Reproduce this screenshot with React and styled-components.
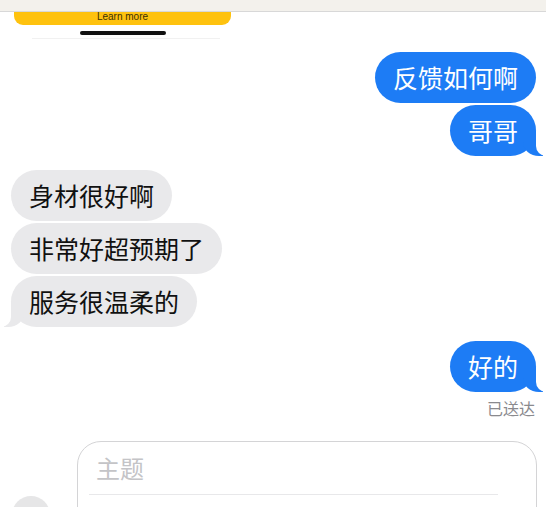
import React from "react";
import styled, { createGlobalStyle, css } from "styled-components";

const Global = createGlobalStyle`
  html, body { margin: 0; padding: 0; background: #ffffff; overflow: hidden; }
  body { font-family: "Noto Sans CJK SC", "Noto Sans", sans-serif; }
`;

const Page = styled.div`
  width: 546px;
  height: 507px;
  display: flex;
  flex-direction: column;
  background: #fff;
  overflow: hidden;
`;

const TopBar = styled.div`
  height: 12px;
  background: #f3f1ec;
  border-bottom: 1px solid #d8d8d8;
  box-sizing: border-box;
  flex-shrink: 0;
`;

const Banner = styled.div`
  margin-left: 14px;
  width: 217px;
  height: 13px;
  background: #fec20f;
  border-radius: 0 0 9px 9px;
  display: flex;
  justify-content: center;
  align-items: flex-start;
  overflow: hidden;
  font-family: "Liberation Sans", Arial, sans-serif;
  font-size: 10px;
  line-height: 9px;
  color: #3b2f05;
  flex-shrink: 0;
`;

const HomeIndicator = styled.div`
  margin: 6px 0 0 80px;
  width: 86px;
  height: 4px;
  border-radius: 2px;
  background: #111;
  flex-shrink: 0;
`;

const FaintLine = styled.div`
  margin: 3px 0 0 32px;
  width: 188px;
  height: 1px;
  background: #f1f1f1;
  flex-shrink: 0;
`;

const Thread = styled.div`
  display: flex;
  flex-direction: column;
  padding-top: 13px;
  gap: 14px;
`;

const Group = styled.div`
  display: flex;
  flex-direction: column;
  gap: 2px;
  align-items: ${(p) => (p.$me ? "flex-end" : "flex-start")};
  padding: ${(p) => (p.$me ? "0 10px 0 0" : "0 0 0 11px")};
`;

const blueTail = css`
  &::before {
    content: "";
    position: absolute;
    bottom: 0;
    right: -7px;
    width: 20px;
    height: 25px;
    background: #1d7cf5;
    border-bottom-left-radius: 16px 14px;
  }
  &::after {
    content: "";
    position: absolute;
    bottom: 0;
    right: -26px;
    width: 26px;
    height: 25px;
    background: #fff;
    border-bottom-left-radius: 10px;
  }
`;

const grayTail = css`
  &::before {
    content: "";
    position: absolute;
    bottom: 0;
    left: -7px;
    width: 20px;
    height: 25px;
    background: #e9e9eb;
    border-bottom-right-radius: 16px 14px;
  }
  &::after {
    content: "";
    position: absolute;
    bottom: 0;
    left: -26px;
    width: 26px;
    height: 25px;
    background: #fff;
    border-bottom-right-radius: 10px;
  }
`;

const Bubble = styled.div`
  position: relative;
  height: 51px;
  padding: 0 18px;
  border-radius: 26px;
  font-size: 25px;
  line-height: 51px;
  white-space: nowrap;
  background: ${(p) => (p.$me ? "#1d7cf5" : "#e9e9eb")};
  color: ${(p) => (p.$me ? "#ffffff" : "#111111")};
  ${(p) => p.$tail && (p.$me ? blueTail : grayTail)}
`;

const Status = styled.div`
  margin-top: 5px;
  margin-right: 1px;
  font-size: 16px;
  line-height: 22px;
  color: #8a8a8e;
`;

const Composer = styled.div`
  display: flex;
  align-items: flex-start;
  margin-top: 22px;
  padding-left: 12px;
  gap: 27px;
`;

const Avatar = styled.div`
  margin-top: 55px;
  width: 38px;
  height: 38px;
  border-radius: 50%;
  background: #e6e6e7;
  flex-shrink: 0;
`;

const InputBox = styled.div`
  width: 460px;
  height: 110px;
  box-sizing: border-box;
  border: 1.5px solid #d4d4d6;
  border-radius: 24px;
  padding: 6px 38px 0 11px;
  display: flex;
  flex-direction: column;
`;

const Subject = styled.div`
  padding-left: 7px;
  font-size: 24px;
  line-height: 40px;
  height: 46px;
  color: #c4c4c7;
  border-bottom: 1px solid #e8e8ea;
`;

const Right = styled.div`
  display: flex;
  flex-direction: column;
  align-items: flex-end;
  padding-right: 10px;
`;

export default function App() {
  return (
    <Page>
      <Global />
      <TopBar />
      <Banner>Learn more</Banner>
      <HomeIndicator />
      <FaintLine />
      <Thread>
        <Group $me>
          <Bubble $me>反馈如何啊</Bubble>
          <Bubble $me $tail>哥哥</Bubble>
        </Group>
        <Group>
          <Bubble>身材很好啊</Bubble>
          <Bubble>非常好超预期了</Bubble>
          <Bubble $tail>服务很温柔的</Bubble>
        </Group>
        <Right>
          <Bubble $me $tail>好的</Bubble>
          <Status>已送达</Status>
        </Right>
      </Thread>
      <Composer>
        <Avatar />
        <InputBox>
          <Subject>主题</Subject>
        </InputBox>
      </Composer>
    </Page>
  );
}
